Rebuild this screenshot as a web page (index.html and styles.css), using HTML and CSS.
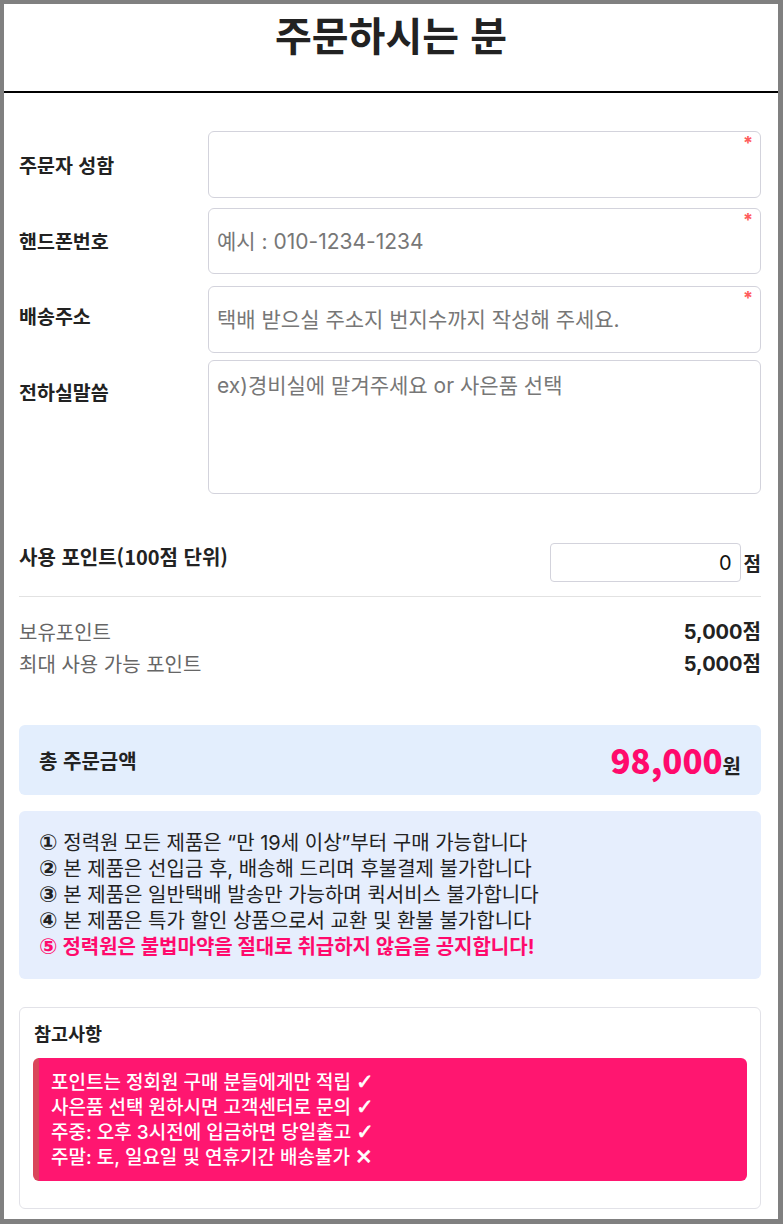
FILE: index.html
```html
<!DOCTYPE html>
<html lang="ko">
<head>
  <meta charset="UTF-8" />
  <meta name="viewport" content="width=device-width, initial-scale=1.0"/>
  <title>주문하시는 분</title>
  <link rel="stylesheet" href="styles.css">
</head>
<body>

  <div class="page">
    <div class="page-head">
      <h1>주문하시는 분</h1>
    </div>

    <form class="order-form">
      <div class="form-row">
        <label>주문자 성함</label>
        <div class="field required">
          <input type="text" name="name" />
        </div>
      </div>

      <div class="form-row row-phone">
        <label>핸드폰번호</label>
        <div class="field required">
          <input type="tel" name="phone" placeholder="예시 : 010-1234-1234" />
        </div>
      </div>

      <div class="form-row row-address">
        <label>배송주소</label>
        <div class="field required">
          <input type="text" name="address" placeholder="택배 받으실 주소지 번지수까지 작성해 주세요." />
        </div>
      </div>

      <div class="form-row row-memo">
        <label>전하실말씀</label>
        <div class="field">
          <textarea name="memo" placeholder="ex)경비실에 맡겨주세요 or 사은품 선택"></textarea>
        </div>
      </div>

      <!-- 포인트 -->
      <div class="point-use">
        <span class="point-label">사용 포인트(100점 단위)</span>
        <div class="point-input">
          <input type="text" name="point" value="0" />
          <span>점</span>
        </div>
      </div>

      <div class="point-info">
        <div class="point-line">
          <span>보유포인트</span>
          <strong>5,000점</strong>
        </div>
        <div class="point-line">
          <span>최대 사용 가능 포인트</span>
          <strong>5,000점</strong>
        </div>
      </div>

      <!-- 총 주문금액 -->
      <div class="total-box">
        <span class="total-label">총 주문금액</span>
        <span class="total-price"><b>98,000</b>원</span>
      </div>

      <div class="notice-box">
        <p><span class="num">①</span> 정력원 모든 제품은 “만 19세 이상”부터 구매 가능합니다</p>
        <p><span class="num">②</span> 본 제품은 선입금 후, 배송해 드리며 후불결제 불가합니다</p>
        <p><span class="num">③</span> 본 제품은 일반택배 발송만 가능하며 퀵서비스 불가합니다</p>
        <p><span class="num">④</span> 본 제품은 특가 할인 상품으로서 교환 및 환불 불가합니다</p>
        <p class="warn"><span class="num">⑤</span> 정력원은 불법마약을 절대로 취급하지 않음을 공지합니다!</p>
      </div>

      <div class="memo-box">
        <h3>참고사항</h3>
        <div class="memo-alert">
          <p>포인트는 정회원 구매 분들에게만 적립 <span class="mark">✓</span></p>
          <p>사은품 선택 원하시면 고객센터로 문의 <span class="mark">✓</span></p>
          <p>주중: 오후 3시전에 입금하면 당일출고 <span class="mark">✓</span></p>
          <p>주말: 토, 일요일 및 연휴기간 배송불가 <span class="mark">✕</span></p>
        </div>
      </div>
    </form>
  </div>

</body>
</html>
```

FILE: styles.css
```css
html {
  background-color: #808080;
}

body {
  font-family: Inter, "Noto Sans CJK KR", sans-serif;
  margin: 4px 5px 5px 4px;
  background-color: #fff;
  color: #222;
  min-height: 1215px;
}

.page-head {
  border-bottom: 2px solid #000;
  height: 87px;
}

.page-head h1 {
  margin: 0;
  font-family: "Noto Sans CJK KR", sans-serif;
  font-size: 40px;
  font-weight: 700;
  line-height: 60px;
  text-align: center;
  color: #222;
}

.order-form {
  padding: 38px 17px 10px 15px;
}

.form-row {
  display: grid;
  grid-template-columns: 189px 1fr;
  align-items: center;
  margin-bottom: 10px;
}

.form-row label {
  font-family: "Noto Sans CJK KR", sans-serif;
  font-size: 19.5px;
  font-weight: 700;
  line-height: 26px;
}

.row-phone {
  margin-bottom: 12px;
}

.row-address {
  margin-bottom: 7px;
}

.row-address label {
  align-self: start;
  padding-top: 17px;
}

.row-memo label {
  align-self: start;
  padding-top: 19px;
}

.field {
  position: relative;
}

.field.required::after {
  content: "*";
  position: absolute;
  top: 3px;
  right: 8px;
  color: #ff5c5c;
  font-size: 18px;
  font-weight: 700;
  line-height: 18px;
}

.field input,
.field textarea {
  display: block;
  width: 100%;
  height: 67px;
  padding: 0 8px;
  border: 1px solid #d3d3dc;
  border-radius: 6px;
  box-sizing: border-box;
  font-family: Inter, "Noto Sans CJK KR", sans-serif;
  font-size: 21px;
  color: #222;
  background-color: #fff;
}

.row-phone input {
  height: 66px;
}

.field textarea {
  height: 134px;
  padding-top: 8px;
  resize: none;
}

::placeholder {
  color: #777;
  opacity: 1;
}

.point-use {
  display: flex;
  justify-content: space-between;
  align-items: flex-start;
  margin-top: 49px;
  padding-bottom: 14px;
  border-bottom: 1px solid #e2e2e2;
}

.point-label {
  font-family: "Noto Sans CJK KR", sans-serif;
  font-size: 20px;
  font-weight: 700;
  line-height: 28px;
}

.point-input {
  display: flex;
  align-items: center;
}

.point-input input {
  width: 191px;
  height: 39px;
  padding: 0 8px;
  border: 1px solid #d3d3dc;
  border-radius: 4px;
  box-sizing: border-box;
  text-align: right;
  font-family: Inter, sans-serif;
  font-size: 20px;
  color: #111;
}

.point-input span {
  margin-left: 3px;
  font-size: 19px;
  font-weight: 700;
}

.point-info {
  padding-top: 19px;
}

.point-line {
  display: flex;
  justify-content: space-between;
  line-height: 32px;
  font-size: 20px;
}

.point-line span {
  color: #666;
  font-family: "Noto Sans CJK KR", sans-serif;
}

.point-line strong {
  font-weight: 700;
}

.total-box {
  display: flex;
  justify-content: space-between;
  align-items: center;
  height: 70px;
  margin-top: 45px;
  padding: 0 20px;
  background-color: #e3eefd;
  border-radius: 6px;
}

.total-label {
  font-family: "Noto Sans CJK KR", sans-serif;
  font-size: 20px;
  font-weight: 700;
}

.total-price {
  font-family: "Noto Sans CJK KR", sans-serif;
  font-size: 20px;
  font-weight: 700;
}

.total-price b {
  color: #ff0a6c;
  font-size: 33px;
}

.notice-box {
  margin-top: 16px;
  padding: 19px 20px;
  background-color: #e6eefd;
  border-radius: 6px;
}

.notice-box p {
  margin: 0;
  font-size: 20px;
  line-height: 26px;
  color: #222;
}

.notice-box .num {
  font-family: "DejaVu Sans", sans-serif;
  font-size: 22px;
  font-weight: 700;
}

.notice-box .warn {
  color: #ff0a6c;
  font-weight: 700;
}

.memo-box {
  margin-top: 28px;
  padding: 14px 13px 27px;
  border: 1px solid #e2e2e8;
  border-radius: 6px;
}

.memo-box h3 {
  margin: 0 0 14px 1px;
  font-family: "Noto Sans CJK KR", sans-serif;
  font-size: 18.5px;
  font-weight: 700;
  line-height: 22px;
}

.memo-alert {
  padding: 12px 12px 11px;
  border-left: 6px solid #d9475a;
  border-radius: 6px;
  background-color: #ff1670;
}

.memo-alert p {
  margin: 0;
  color: #fff;
  font-size: 19px;
  font-weight: 500;
  line-height: 25px;
}

.memo-alert .mark {
  font-family: "DejaVu Sans", sans-serif;
  font-size: 21px;
  -webkit-text-stroke: 0.6px #fff;
}
```
